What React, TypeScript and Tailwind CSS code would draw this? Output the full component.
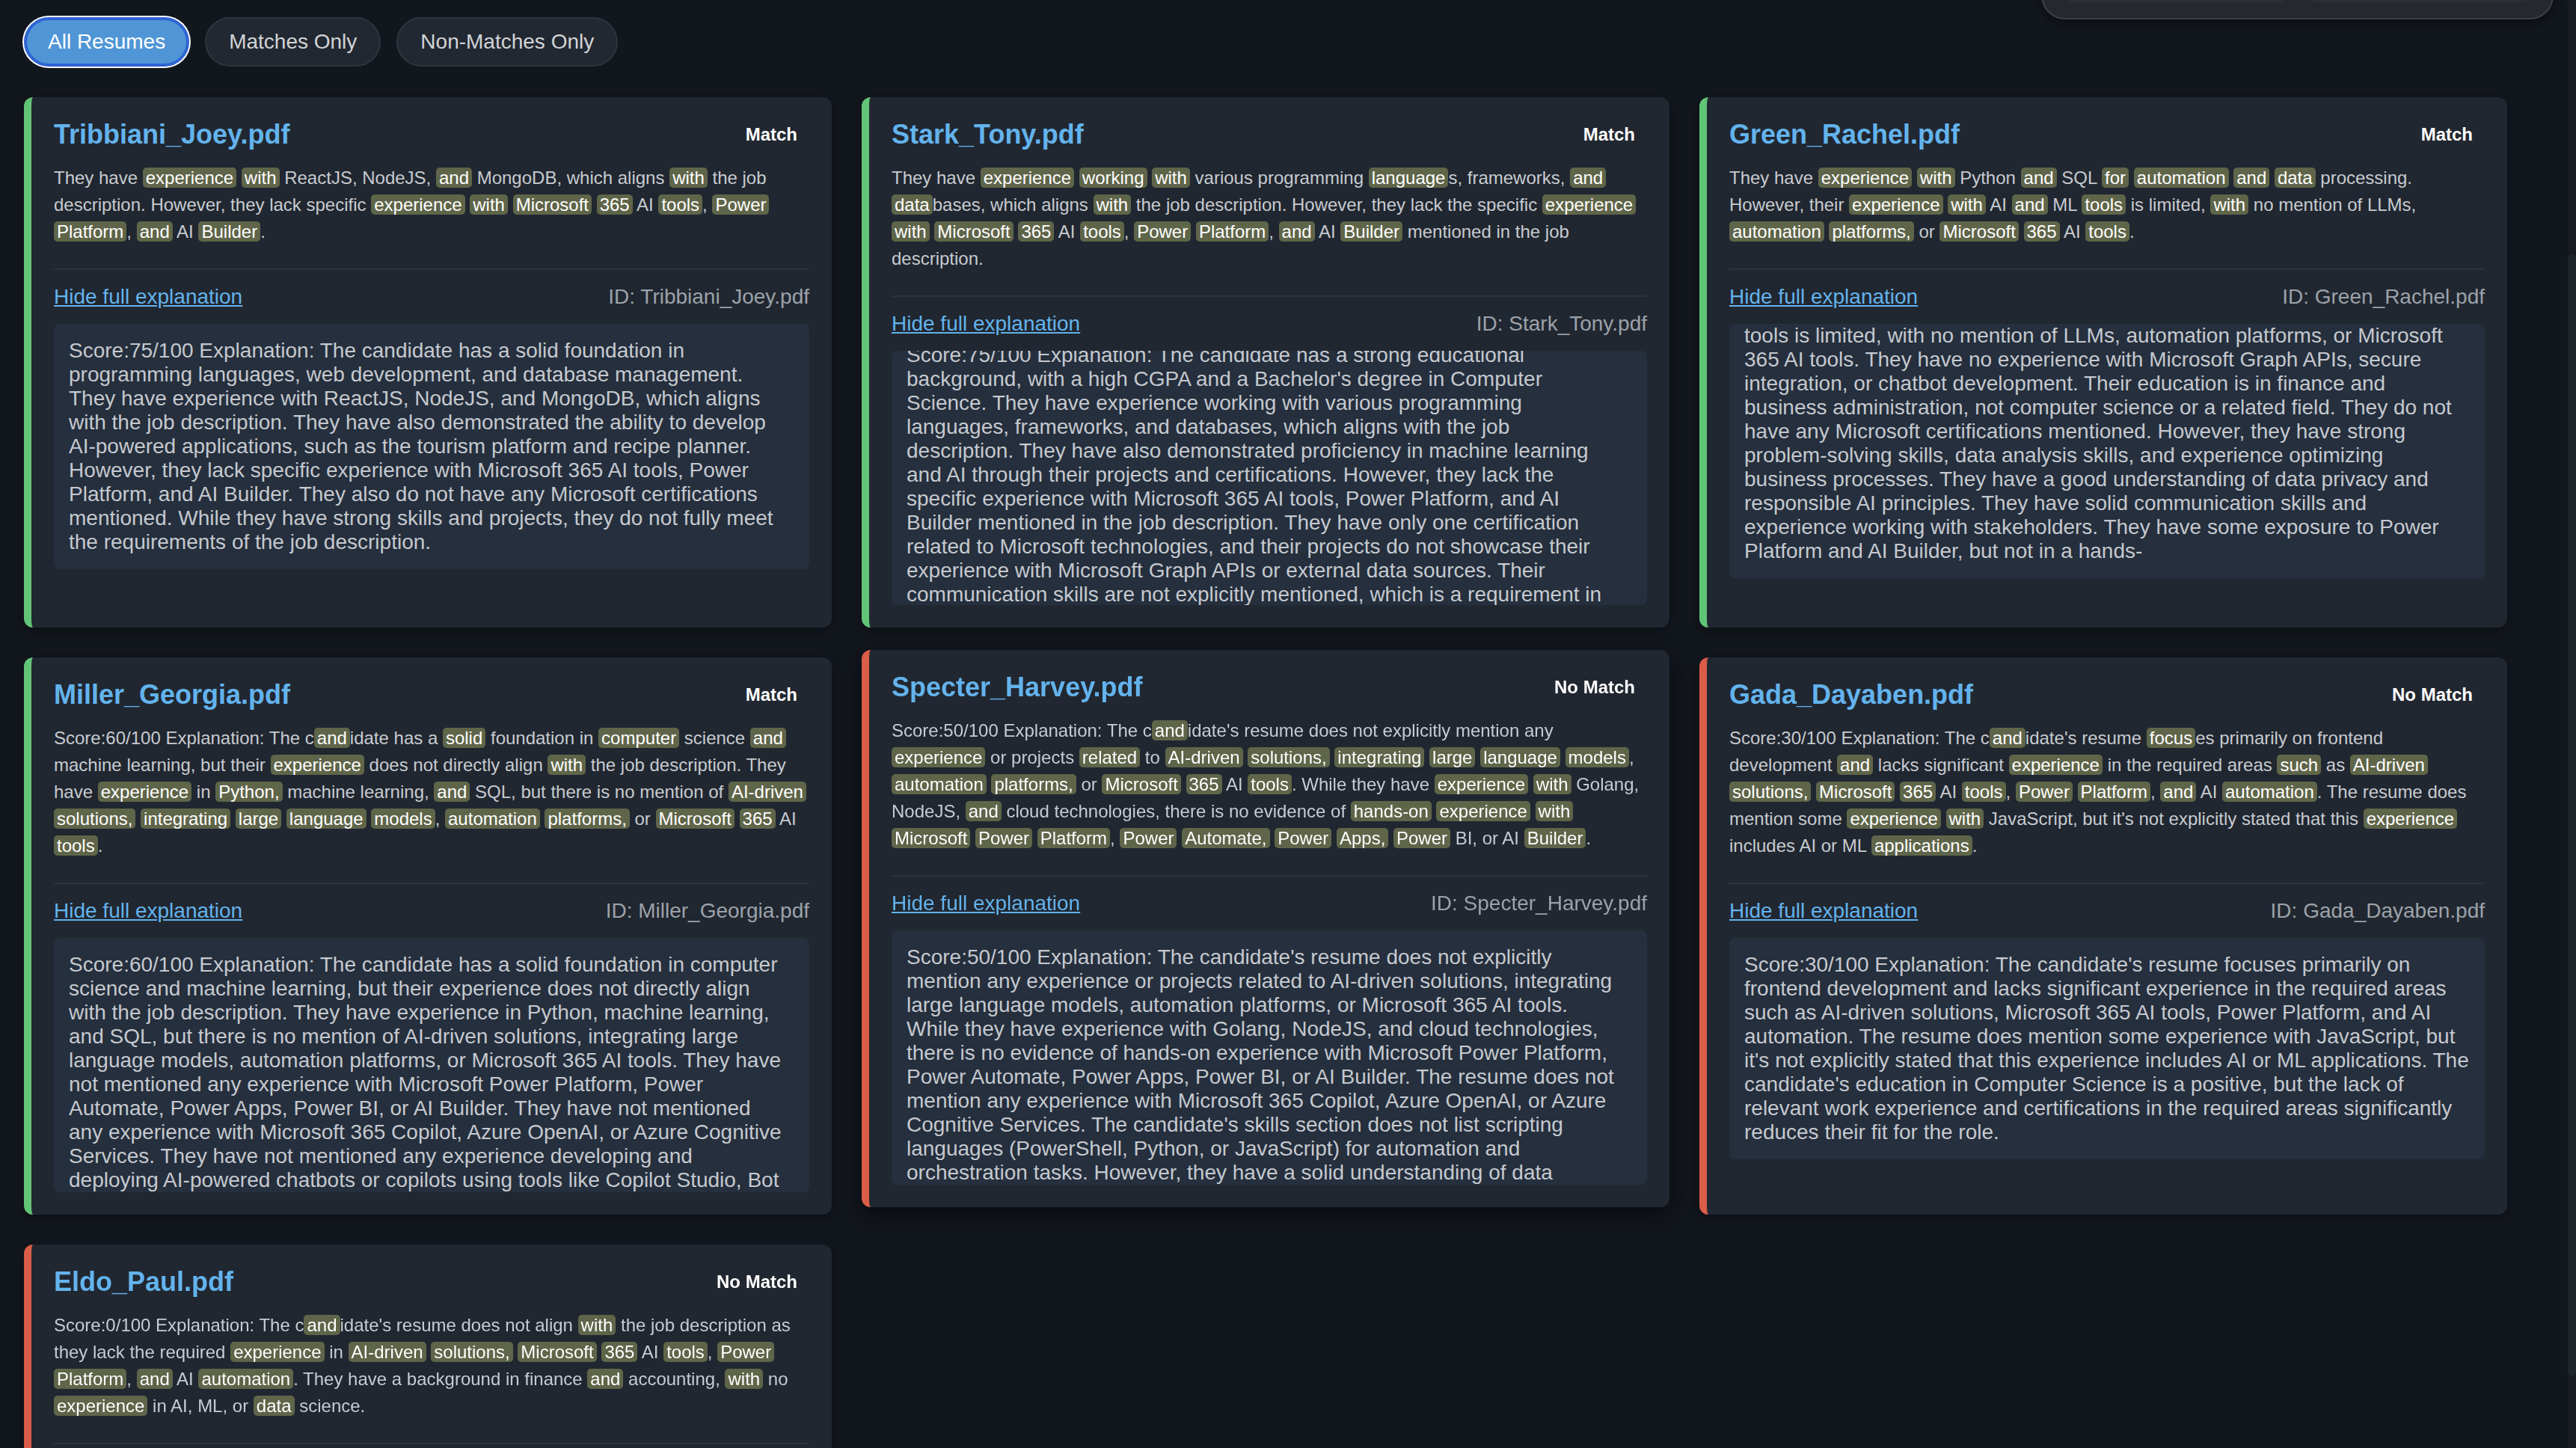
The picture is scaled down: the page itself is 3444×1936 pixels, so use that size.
import React, { useEffect, useRef } from 'react';

type Resume = {
  file: string;
  match: boolean;
  summary: string;
  lead?: string;
  explanation: string;
  long?: boolean;
  scroll?: number | 'bottom';
  lifted?: boolean;
};

const resumes: Resume[] = [
  {
    file: 'Tribbiani_Joey.pdf',
    match: true,
    summary:
      'They have [experience] [with] ReactJS, NodeJS, [and] MongoDB, which aligns [with] the job description. However, they lack specific [experience] [with] [Microsoft] [365] AI [tools], [Power] [Platform], [and] AI [Builder].',
    explanation:
      'Score:75/100 Explanation: The candidate has a solid foundation in programming languages, web development, and database management. They have experience with ReactJS, NodeJS, and MongoDB, which aligns with the job description. They have also demonstrated the ability to develop AI-powered applications, such as the tourism platform and recipe planner. However, they lack specific experience with Microsoft 365 AI tools, Power Platform, and AI Builder. They also do not have any Microsoft certifications mentioned. While they have strong skills and projects, they do not fully meet the requirements of the job description.',
  },
  {
    file: 'Stark_Tony.pdf',
    match: true,
    long: true,
    summary:
      'They have [experience] [working] [with] various programming [language]s, frameworks, [and] [data]bases, which aligns [with] the job description. However, they lack the specific [experience] [with] [Microsoft] [365] AI [tools], [Power] [Platform], [and] AI [Builder] mentioned in the job description.',
    explanation:
      "Score:75/100 Explanation: The candidate has a strong educational background, with a high CGPA and a Bachelor's degree in Computer Science. They have experience working with various programming languages, frameworks, and databases, which aligns with the job description. They have also demonstrated proficiency in machine learning and AI through their projects and certifications. However, they lack the specific experience with Microsoft 365 AI tools, Power Platform, and AI Builder mentioned in the job description. They have only one certification related to Microsoft technologies, and their projects do not showcase their experience with Microsoft Graph APIs or external data sources. Their communication skills are not explicitly mentioned, which is a requirement in the job description. Overall, they show potential but need more hands-on experience with the required tools.",
    scroll: 30,
  },
  {
    file: 'Green_Rachel.pdf',
    match: true,
    long: true,
    summary:
      'They have [experience] [with] Python [and] SQL [for] [automation] [and] [data] processing. However, their [experience] [with] AI [and] ML [tools] is limited, [with] no mention of LLMs, [automation] [platforms,] or [Microsoft] [365] AI [tools].',
    lead:
      'Score:60/100 Explanation: The candidate has experience with Python and SQL for automation and data processing. However, their experience with AI and ML',
    explanation:
      'tools is limited, with no mention of LLMs, automation platforms, or Microsoft 365 AI tools. They have no experience with Microsoft Graph APIs, secure integration, or chatbot development. Their education is in finance and business administration, not computer science or a related field. They do not have any Microsoft certifications mentioned. However, they have strong problem-solving skills, data analysis skills, and experience optimizing business processes. They have a good understanding of data privacy and responsible AI principles. They have solid communication skills and experience working with stakeholders. They have some exposure to Power Platform and AI Builder, but not in a hands-',
    scroll: 'bottom',
  },
  {
    file: 'Miller_Georgia.pdf',
    match: true,
    long: true,
    summary:
      'Score:60/100 Explanation: The c[and]idate has a [solid] foundation in [computer] science [and] machine learning, but their [experience] does not directly align [with] the job description. They have [experience] in [Python,] machine learning, [and] SQL, but there is no mention of [AI-driven] [solutions,] [integrating] [large] [language] [models], [automation] [platforms,] or [Microsoft] [365] AI [tools].',
    explanation:
      'Score:60/100 Explanation: The candidate has a solid foundation in computer science and machine learning, but their experience does not directly align with the job description. They have experience in Python, machine learning, and SQL, but there is no mention of AI-driven solutions, integrating large language models, automation platforms, or Microsoft 365 AI tools. They have not mentioned any experience with Microsoft Power Platform, Power Automate, Power Apps, Power BI, or AI Builder. They have not mentioned any experience with Microsoft 365 Copilot, Azure OpenAI, or Azure Cognitive Services. They have not mentioned any experience developing and deploying AI-powered chatbots or copilots using tools like Copilot Studio, Bot Framework, or Azure AI services.',
  },
  {
    file: 'Specter_Harvey.pdf',
    match: false,
    long: true,
    lifted: true,
    summary:
      "Score:50/100 Explanation: The c[and]idate's resume does not explicitly mention any [experience] or projects [related] to [AI-driven] [solutions,] [integrating] [large] [language] [models], [automation] [platforms,] or [Microsoft] [365] AI [tools]. While they have [experience] [with] Golang, NodeJS, [and] cloud technologies, there is no evidence of [hands-on] [experience] [with] [Microsoft] [Power] [Platform], [Power] [Automate,] [Power] [Apps,] [Power] BI, or AI [Builder].",
    explanation:
      "Score:50/100 Explanation: The candidate's resume does not explicitly mention any experience or projects related to AI-driven solutions, integrating large language models, automation platforms, or Microsoft 365 AI tools. While they have experience with Golang, NodeJS, and cloud technologies, there is no evidence of hands-on experience with Microsoft Power Platform, Power Automate, Power Apps, Power BI, or AI Builder. The resume does not mention any experience with Microsoft 365 Copilot, Azure OpenAI, or Azure Cognitive Services. The candidate's skills section does not list scripting languages (PowerShell, Python, or JavaScript) for automation and orchestration tasks. However, they have a solid understanding of data structures and algorithms, which could be useful for the role.",
  },
  {
    file: 'Gada_Dayaben.pdf',
    match: false,
    summary:
      "Score:30/100 Explanation: The c[and]idate's resume [focus]es primarily on frontend development [and] lacks significant [experience] in the required areas [such] as [AI-driven] [solutions,] [Microsoft] [365] AI [tools], [Power] [Platform], [and] AI [automation]. The resume does mention some [experience] [with] JavaScript, but it's not explicitly stated that this [experience] includes AI or ML [applications].",
    explanation:
      "Score:30/100 Explanation: The candidate's resume focuses primarily on frontend development and lacks significant experience in the required areas such as AI-driven solutions, Microsoft 365 AI tools, Power Platform, and AI automation. The resume does mention some experience with JavaScript, but it's not explicitly stated that this experience includes AI or ML applications. The candidate's education in Computer Science is a positive, but the lack of relevant work experience and certifications in the required areas significantly reduces their fit for the role.",
  },
  {
    file: 'Eldo_Paul.pdf',
    match: false,
    summary:
      "Score:0/100 Explanation: The c[and]idate's resume does not align [with] the job description as they lack the required [experience] in [AI-driven] [solutions,] [Microsoft] [365] AI [tools], [Power] [Platform], [and] AI [automation]. They have a background in finance [and] accounting, [with] no [experience] in AI, ML, or [data] science.",
    explanation:
      "Score:0/100 Explanation: The candidate's resume does not align with the job description as they lack the required experience in AI-driven solutions, Microsoft 365 AI tools, Power Platform, and AI automation. They have a background in finance and accounting, with no experience in AI, ML, or data science.",
  },
];

function Highlighted({ text }: { text: string }) {
  const parts = text.split(/(\[[^\]]+\])/);
  return (
    <>
      {parts.map((p, i) =>
        p.startsWith('[') ? (
          <span key={i} className="rounded-[5px] bg-[#5f6549] px-[4px] text-white">
            {p.slice(1, -1)}
          </span>
        ) : (
          <React.Fragment key={i}>{p}</React.Fragment>
        )
      )}
    </>
  );
}

function ResumeCard({ r }: { r: Resume }) {
  const boxRef = useRef<HTMLDivElement>(null);

  useEffect(() => {
    const el = boxRef.current;
    if (!el || r.scroll === undefined) return;
    el.scrollTop = r.scroll === 'bottom' ? el.scrollHeight : r.scroll;
  }, [r.scroll]);

  return (
    <div
      className={`flex flex-col rounded-[12px] border-l-[10px] bg-[#212730] p-[30px] ${
        r.match ? 'border-[#62c476]' : 'border-[#d95d48]'
      } ${
        r.lifted
          ? '-translate-y-[10px] shadow-[0_12px_30px_rgba(0,0,0,0.5)]'
          : 'shadow-[0_4px_14px_rgba(0,0,0,0.3)]'
      }`}
    >
      <div className="flex h-[40px] items-center justify-between">
        <h3 className="text-[36px] font-bold leading-[40px] text-[#63b3ed]">{r.file}</h3>
        <span className="px-[16px] text-[24px] font-bold text-white">
          {r.match ? 'Match' : 'No Match'}
        </span>
      </div>

      <p className="mt-[20px] text-[24px] leading-[36px] text-[#c7cbd1]">
        <Highlighted text={r.summary} />
      </p>

      <div className="mt-[31px] flex items-center justify-between border-t-2 border-[#2c333d] pt-[20px] text-[28px] leading-[32px]">
        <a className="cursor-pointer text-[#63b3ed] underline">Hide full explanation</a>
        <span className="text-[#9ca2aa]">ID: {r.file}</span>
      </div>

      <div
        ref={boxRef}
        className={`mt-[20px] max-h-[340px] overflow-y-auto rounded-[8px] bg-[#252f3d] py-[20px] pl-[20px] text-[28px] leading-[32px] text-[#c5c9cf] [&::-webkit-scrollbar]:w-[16px] [&::-webkit-scrollbar-track]:bg-[#1f262f] [&::-webkit-scrollbar-thumb]:rounded-[8px] [&::-webkit-scrollbar-thumb]:bg-[#2c3541] ${
          r.long ? 'pr-[36px]' : 'pr-[20px]'
        }`}
      >
        {r.lead && (
          <>
            {r.lead}
            <br />
          </>
        )}
        {r.explanation}
      </div>
    </div>
  );
}

const filters = ['All Resumes', 'Matches Only', 'Non-Matches Only'];

export default function App() {
  return (
    <div className="flex h-[1936px] w-[3444px] overflow-hidden bg-[#12161d] font-['Liberation_Sans',Arial,sans-serif]">
      <main className="flex-1 pl-[32px]">
        <div className="flex items-start justify-between pr-[19px]">
          <div className="mt-[23px] flex gap-[21px]">
            {filters.map((f, i) => (
              <button
                key={f}
                className={
                  i === 0
                    ? 'rounded-full border-2 border-[#2d61d2] bg-[#5096d6] px-[30px] py-[15px] text-[28px] leading-[32px] text-white shadow-[inset_0_0_0_2px_#2d61d2,0_0_0_2px_#ffffff]'
                    : 'rounded-full border-2 border-[#2f353d] bg-[#222831] px-[30px] py-[15px] text-[28px] leading-[32px] text-[#d2d4d7]'
                }
              >
                {f}
              </button>
            ))}
          </div>

          <div className="-mt-[70px] flex h-[96px] w-[685px] items-end gap-[22px] rounded-[32px] border-2 border-[#3b4047] bg-[#25292f] px-[25px] pb-[21px] shadow-[0_4px_12px_rgba(0,0,0,0.4)]">
            <div className="h-[40px] flex-1 rounded-[16px] bg-[#2b2f36]" />
            <div className="h-[40px] flex-1 rounded-[16px] bg-[#2b2f36]" />
          </div>
        </div>

        <div className="mt-[41px] grid w-[3320px] grid-cols-3 gap-[40px]">
          {resumes.map((r) => (
            <ResumeCard key={r.file} r={r} />
          ))}
        </div>
      </main>

      <div className="flex w-[11px] flex-col bg-[#171b21]">
        <div className="mt-[340px] h-[1500px] w-full rounded-full bg-[#20252c]" />
      </div>
    </div>
  );
}
